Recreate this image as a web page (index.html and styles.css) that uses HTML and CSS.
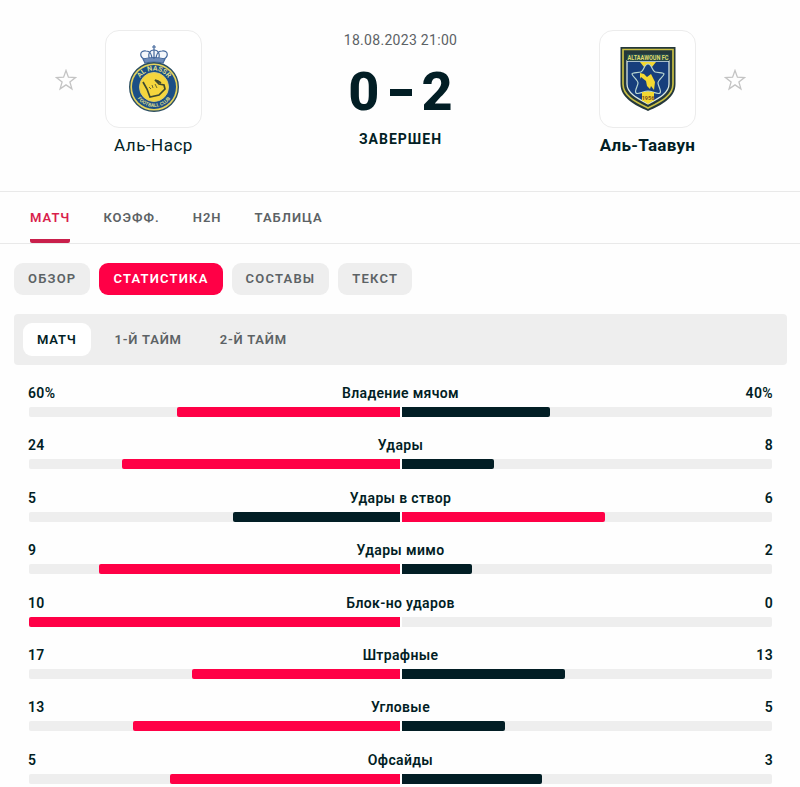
FILE: index.html
```html
<!DOCTYPE html>
<html lang="ru">
<head>
    <meta charset="UTF-8">
    <meta name="viewport" content="width=device-width, initial-scale=1.0">
    <title>Аль-Наср - Аль-Таавун</title>
    <link rel="stylesheet" href="styles.css">
</head>
<body>

<header class="match">
    <svg class="star" viewBox="0 0 22 22"><path d="M11 1.5l2.4 6.7 7.1.3-5.6 4.4 2 7-5.9-4-5.9 4 2-7-5.6-4.4 7.1-.3z"/></svg>

    <div class="team">
        <div class="crest">
            <svg width="52" height="68" viewBox="0 0 52 68">
                <g fill="#f4f7fb" stroke="#44689c" stroke-width="1.2">
                    <path d="M18 15C10 12 12 5 18 6c4 0 6 4 6 9M34 15c8-3 6-10 0-9-4 0-6 4-6 9M22 15c-3-6 0-10 4-10s7 4 4 10"/>
                    <path d="M15 14q11-3 22 0l-2 4q-9-2-18 0z" fill="#6d8bb8"/>
                    <path d="M26 0v14M24 2h4"/>
                </g>
                <circle cx="26" cy="42" r="24.3" fill="#e6d45e" stroke="#2c4f63" stroke-width="1.4"/>
                <circle cx="26" cy="42" r="22" fill="#1c4f86"/>
                <circle cx="26" cy="42" r="14.5" fill="#f5d63d" stroke="#d9cc70"/>
                <path id="arcTop" d="M9.5 42a16.5 16.5 0 0 1 33 0" fill="none"/>
                <path id="arcBottom" d="M6 42a20 20 0 0 0 40 0" fill="none"/>
                <text class="ring-text"><textPath href="#arcTop" startOffset="50%">AL NASSR</textPath></text>
                <text class="ring-text ring-text-small"><textPath href="#arcBottom" startOffset="50%">FOOTBALL CLUB</textPath></text>
                <path d="M15 37l4 7 3 8 9-2 6-6-1-4-5-1-4-4 3 1 3 2" fill="none" stroke="#3d4930" stroke-width="1.7"/>
                <path d="M21 42l2 2M24 40l1 3M27 39l2 4" fill="none" stroke="#6b6a30"/>
            </svg>
        </div>
        <div class="team-name">Аль-Наср</div>
    </div>

    <div class="result">
        <div class="date">18.08.2023 21:00</div>
        <div class="score"><span>0</span><span class="dash"></span><span>2</span></div>
        <div class="status">ЗАВЕРШЕН</div>
    </div>

    <div class="team">
        <div class="crest">
            <svg width="56" height="66" viewBox="0 0 56 66">
                <path d="M.5 1h55v37c0 14-14 21-27.500 27C14.500 59 .5 52 .5 38z" fill="#24383b"/>
                <path d="M3 3.500h50V38c0 12-13 18-25 24C16 56 3 50 3 38z" fill="none" stroke="#c9bf45" stroke-width="1.700"/>
                <path d="M7 15h42v23c0 9-10 14-21 20C17 52 7 47 7 38z" fill="#173e7c" stroke="#d9e7e2" stroke-width="1.300"/>
                <path d="M7 8h42v7H7z" fill="#24494c"/>
                <text class="shield-text" x="28" y="14" textLength="41" lengthAdjust="spacingAndGlyphs">ALTAAWOUN FC</text>
                <path d="M20 16h16l-4 5h-8zM22 45h12v9l-6 4-6-4z" fill="#f3d832"/>
                <path d="M28 18c4 0 4 7 7 8s9 0 9 2-6 6-6 9 4 8 2 10-8-2-12-2-10 4-12 2 2-7 2-10-6-7-6-9 6-1 9-2 3-8 7-8z" fill="#173e7c" stroke="#b9d6d0" stroke-width="1.200"/>
                <path d="M20 27l4 1 3 3 4-3 4 8-1 8-3-4-1 3-3-3-1-5-5-4-1 2z" fill="#f3d832"/>
                <path d="M22 46h12v9H22z" fill="#f3d832"/>
                <text class="shield-text shield-year" x="28" y="53.500">1956</text>
            </svg>
        </div>
        <div class="team-name winner">Аль-Таавун</div>
    </div>

    <svg class="star" viewBox="0 0 22 22"><path d="M11 1.5l2.4 6.7 7.1.3-5.6 4.4 2 7-5.9-4-5.9 4 2-7-5.6-4.4 7.1-.3z"/></svg>
</header>

<nav class="tabs">
    <a class="tab active">МАТЧ</a>
    <a class="tab">КОЭФФ.</a>
    <a class="tab">H2H</a>
    <a class="tab">ТАБЛИЦА</a>
</nav>

<nav class="pills">
    <a class="pill">ОБЗОР</a>
    <a class="pill active">СТАТИСТИКА</a>
    <a class="pill">СОСТАВЫ</a>
    <a class="pill">ТЕКСТ</a>
</nav>

<nav class="periods">
    <a class="period active">МАТЧ</a>
    <a class="period">1-Й ТАЙМ</a>
    <a class="period">2-Й ТАЙМ</a>
</nav>

<main class="stats">
    <div class="stat">
        <div class="values"><b>60%</b><span class="label">Владение мячом</span><b>40%</b></div>
        <div class="bars">
            <div class="bar home"><div class="fill lead" style="width: 60%"></div></div>
            <div class="bar"><div class="fill" style="width: 40%"></div></div>
        </div>
    </div>
    <div class="stat">
        <div class="values"><b>24</b><span class="label">Удары</span><b>8</b></div>
        <div class="bars">
            <div class="bar home"><div class="fill lead" style="width: 75%"></div></div>
            <div class="bar"><div class="fill" style="width: 25%"></div></div>
        </div>
    </div>
    <div class="stat">
        <div class="values"><b>5</b><span class="label">Удары в створ</span><b>6</b></div>
        <div class="bars">
            <div class="bar home"><div class="fill" style="width: 45%"></div></div>
            <div class="bar"><div class="fill lead" style="width: 55%"></div></div>
        </div>
    </div>
    <div class="stat">
        <div class="values"><b>9</b><span class="label">Удары мимо</span><b>2</b></div>
        <div class="bars">
            <div class="bar home"><div class="fill lead" style="width: 81%"></div></div>
            <div class="bar"><div class="fill" style="width: 19%"></div></div>
        </div>
    </div>
    <div class="stat">
        <div class="values"><b>10</b><span class="label">Блок-но ударов</span><b>0</b></div>
        <div class="bars">
            <div class="bar home"><div class="fill lead" style="width: 100%"></div></div>
            <div class="bar"><div class="fill" style="width: 0%"></div></div>
        </div>
    </div>
    <div class="stat">
        <div class="values"><b>17</b><span class="label">Штрафные</span><b>13</b></div>
        <div class="bars">
            <div class="bar home"><div class="fill lead" style="width: 56%"></div></div>
            <div class="bar"><div class="fill" style="width: 44%"></div></div>
        </div>
    </div>
    <div class="stat">
        <div class="values"><b>13</b><span class="label">Угловые</span><b>5</b></div>
        <div class="bars">
            <div class="bar home"><div class="fill lead" style="width: 72%"></div></div>
            <div class="bar"><div class="fill" style="width: 28%"></div></div>
        </div>
    </div>
    <div class="stat">
        <div class="values"><b>5</b><span class="label">Офсайды</span><b>3</b></div>
        <div class="bars">
            <div class="bar home"><div class="fill lead" style="width: 62%"></div></div>
            <div class="bar"><div class="fill" style="width: 38%"></div></div>
        </div>
    </div>
</main>

</body>
</html>
```

FILE: styles.css
```css
* {
    box-sizing: border-box;
}

body {
    margin: 0;
    height: 787px;
    overflow: hidden;
    font-family: Roboto, "Liberation Sans", sans-serif;
    background-color: #fefefe;
    color: #021e25;
}

/* Шапка матча */
.match {
    display: grid;
    grid-template-columns: 22px 153px 1fr 153px 22px;
    height: 192px;
    padding: 30px 54px 0 55px;
    border-bottom: 1px solid #e9e9e9;
}

.star {
    width: 22px;
    height: 22px;
    margin-top: 39px;
    fill: none;
    stroke: #c4c4c4;
    stroke-width: 1.3;
}

.team {
    display: flex;
    flex-direction: column;
    align-items: center;
}

.crest {
    display: flex;
    align-items: center;
    justify-content: center;
    width: 97px;
    height: 98px;
    border: 1px solid #ececec;
    border-radius: 14px;
    background-color: white;
}

.ring-text {
    font-size: 7px;
    font-weight: bold;
    fill: #d8d98a;
    text-anchor: middle;
}

.ring-text-small { font-size: 5px; }

.shield-text {
    font-size: 6.5px;
    font-weight: bold;
    fill: #dfd96a;
    text-anchor: middle;
}

.shield-year {
    font-size: 5.5px;
    fill: #7a4b20;
}

.team-name {
    margin-top: 6px;
    font-size: 17px;
    line-height: 22px;
    letter-spacing: 0.5px;
}

.winner {
    font-weight: bold;
    letter-spacing: 0.3px;
}

.result {
    display: flex;
    flex-direction: column;
    align-items: center;
}

.date {
    font-size: 14px;
    line-height: 20px;
    letter-spacing: 0.3px;
    color: #5c6265;
}

.score {
    display: flex;
    align-items: center;
    gap: 10px;
    height: 60px;
    margin-top: 12px;
    font-size: 54px;
    font-weight: 800;
    line-height: 60px;
}

.dash {
    width: 22px;
    height: 7px;
    background-color: #021e25;
}

.status {
    margin-top: 7px;
    font-size: 14px;
    font-weight: bold;
    line-height: 20px;
    letter-spacing: 1px;
}

/* Основные вкладки */
.tabs {
    display: flex;
    gap: 33px;
    height: 52px;
    padding-left: 30px;
    border-bottom: 1px solid #e9e9e9;
}

.tab {
    height: 51px;
    font-size: 13px;
    font-weight: 600;
    line-height: 51px;
    letter-spacing: 1px;
    color: #5c6265;
}

.tab.active {
    color: #d91f4c;
    border-bottom: 4px solid #c91f4b;
    border-radius: 2px;
}

.pills {
    display: flex;
    gap: 9px;
    padding: 19px 14px;
}

.pill {
    height: 32px;
    padding: 0 14px;
    border-radius: 9px;
    background-color: #eeeeee;
    font-size: 13px;
    font-weight: 600;
    line-height: 32px;
    letter-spacing: 1.2px;
    color: #5c6265;
}

.pill.active {
    background-color: #ff0046;
    color: white;
}

.periods {
    display: flex;
    gap: 10px;
    width: 773px;
    height: 51px;
    margin-left: 14px;
    padding: 9px;
    border-radius: 4px;
    background-color: #eeeeee;
}

.period {
    padding: 0 14px;
    border-radius: 9px;
    font-size: 13px;
    font-weight: 600;
    line-height: 33px;
    letter-spacing: 0.8px;
    color: #5c6265;
}

.period.active {
    background-color: white;
    color: #021e25;
}

/* Статистика */
.stats {
    padding: 18px 28px 0 29px;
}

.stat {
    height: 52.4px;
}

.values {
    display: grid;
    grid-template-columns: 60px 1fr 60px;
    height: 24px;
    margin: 0 -1px;
    font-size: 14px;
    font-weight: 600;
    line-height: 20px;
    letter-spacing: 0.35px;
}

.values b { font-weight: 600; }
.values b:last-child { text-align: right; }
.label { text-align: center; }

.bars {
    display: grid;
    grid-template-columns: 1fr 1fr;
    gap: 2px;
}

.bar {
    display: flex;
    height: 10px;
    border-radius: 0 2px 2px 0;
    background-color: #eeeeee;
}

.bar.home {
    justify-content: flex-end;
    border-radius: 2px 0 0 2px;
}

.fill {
    background-color: #021e25;
    border-radius: inherit;
}

.fill.lead { background-color: #ff0046; }
```
